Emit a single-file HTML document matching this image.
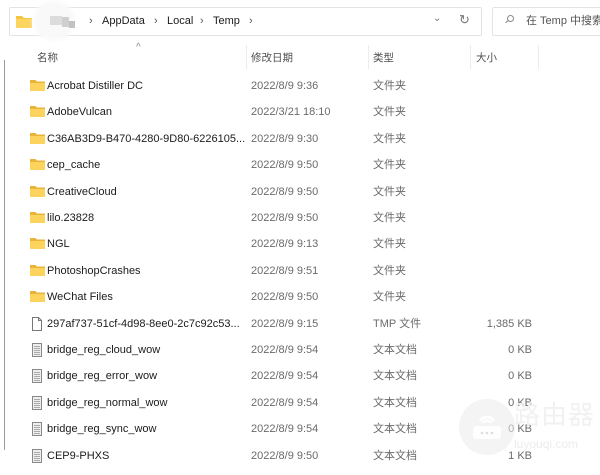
<!DOCTYPE html>
<html><head><meta charset="utf-8"><style>
*{margin:0;padding:0;box-sizing:border-box}
body{width:600px;height:473px;overflow:hidden;background:#fff;font-family:"Liberation Sans","Noto Sans CJK SC",sans-serif;font-size:11px;color:#1b1b1b;position:relative}
.addr{position:absolute;left:9px;top:7px;width:473px;height:29px;border:1px solid #e3e3e3;border-radius:2px;background:#fff}
.search{position:absolute;left:492px;top:7px;width:120px;height:29px;border:1px solid #e3e3e3;border-radius:2px}
.t{position:absolute;white-space:nowrap;line-height:14px;height:14px}
.hdr{color:#4f4f4f;font-size:10.5px}
.sep{position:absolute;top:45px;width:1px;height:24px;background:#ececec}
.row{position:absolute;left:0;height:26px;width:600px}
.row .t{top:0}
.row .n{left:47px}
.row .d{left:251px;color:#6a6a6a}
.row .y{left:373px;color:#6a6a6a}
.row .s{right:68px;color:#6a6a6a}
.ic{position:absolute;left:30px;top:-1px}
</style></head><body>
<div class="addr"></div>
<svg style="position:absolute;left:16px;top:15px" width="16" height="13"><path d="M0 1h6l2 2h8v10H0z" fill="#f4c542"/><rect x="0" y="4" width="16" height="9" fill="#fbd560"/></svg>
<div style="position:absolute;left:36px;top:4px;width:36px;height:34px;border-radius:18px;background:#f9f9f9;box-shadow:0 0 5px 3px #fafafa"></div>
<div style="position:absolute;left:50px;top:16px;width:12px;height:9px;background:#dcdcdc"></div>
<div style="position:absolute;left:62px;top:17px;width:7px;height:10px;background:#cfcfcf"></div>
<div style="position:absolute;left:69px;top:21px;width:6px;height:7px;background:#c2c2c2"></div>
<div class="t" style="left:89px;top:14px;color:#555">›</div>
<div class="t" style="left:102px;top:14px">AppData</div>
<div class="t" style="left:154px;top:14px;color:#555">›</div>
<div class="t" style="left:167px;top:14px">Local</div>
<div class="t" style="left:200px;top:14px;color:#555">›</div>
<div class="t" style="left:213px;top:14px">Temp</div>
<div class="t" style="left:249px;top:14px;color:#555">›</div>
<div class="t" style="left:433px;top:12px;color:#777;font-size:10px">⌄</div>
<div class="t" style="left:459px;top:13px;color:#777;font-size:13px">↻</div>
<div class="search"></div>
<div style="position:absolute;left:507px;top:15px;width:7px;height:7px;border:1px solid #888;border-radius:50%"></div>
<div style="position:absolute;left:505px;top:21px;width:4px;height:1px;background:#888;transform:rotate(-45deg)"></div>
<div class="t" style="left:526px;top:14px;color:#555">在 Temp 中搜索</div>
<div style="position:absolute;left:4px;top:60px;width:1px;height:390px;background:#9a9a9a"></div>
<div class="t" style="left:136px;top:41px;color:#888;font-size:10px">^</div>
<div class="t hdr" style="left:37px;top:51px">名称</div>
<div class="t hdr" style="left:251px;top:51px">修改日期</div>
<div class="t hdr" style="left:373px;top:51px">类型</div>
<div class="t hdr" style="left:476px;top:51px">大小</div>
<div class="sep" style="left:246px"></div><div class="sep" style="left:368px"></div><div class="sep" style="left:470px"></div><div class="sep" style="left:538px"></div>
<div id="rows"></div>
<div style="position:absolute;left:459px;top:399px;width:56px;height:56px;border-radius:50%;background:rgba(235,235,235,.55)"></div>
<svg style="position:absolute;left:471px;top:412px" width="32" height="30"><path d="M9 9a8 8 0 0 1 14 0M12 11a4.5 4.5 0 0 1 8 0" stroke="#fff" stroke-width="2.5" fill="none"/><rect x="2" y="14" width="28" height="13" rx="3" fill="#fff" opacity=".9"/><circle cx="11" cy="21" r="1.3" fill="#ddd"/><circle cx="16" cy="21" r="1.3" fill="#ddd"/><circle cx="21" cy="21" r="1.3" fill="#ddd"/></svg>
<div class="t" style="left:514px;top:400px;font-size:26px;line-height:30px;height:30px;color:rgba(240,240,240,.95);letter-spacing:1px">路由器</div>
<div class="t" style="left:514px;top:437px;font-size:12px;color:rgba(235,235,235,.95)">luyouqi.com</div>
<script>
var F='<svg class="ic" width="15" height="14" viewBox="0 0 15 14"><path d="M0 2h5.5l1.5 1.5h8V13H0z" fill="#e8b53a"/><rect x="0" y="5" width="15" height="8" fill="#fcd45d"/></svg>';
var B='<svg class="ic" width="14" height="16" viewBox="0 0 14 16"><path d="M2.5 1.5h6l3 3v10h-9z" fill="#fff" stroke="#777"/><path d="M8.5 1.5v3h3" fill="none" stroke="#777"/></svg>';
var T='<svg class="ic" width="14" height="16" viewBox="0 0 14 16"><path d="M2.5 1.5h9v13h-9z" fill="#eee" stroke="#888"/><path d="M4 4.5h6M4 6.5h6M4 8.5h6M4 10.5h6M4 12.5h6" stroke="#aaa"/></svg>';
var r=[[F,"Acrobat Distiller DC","2022/8/9 9:36","文件夹",""],[F,"AdobeVulcan","2022/3/21 18:10","文件夹",""],[F,"C36AB3D9-B470-4280-9D80-6226105...","2022/8/9 9:30","文件夹",""],[F,"cep_cache","2022/8/9 9:50","文件夹",""],[F,"CreativeCloud","2022/8/9 9:50","文件夹",""],[F,"lilo.23828","2022/8/9 9:50","文件夹",""],[F,"NGL","2022/8/9 9:13","文件夹",""],[F,"PhotoshopCrashes","2022/8/9 9:51","文件夹",""],[F,"WeChat Files","2022/8/9 9:50","文件夹",""],[B,"297af737-51cf-4d98-8ee0-2c7c92c53...","2022/8/9 9:15","TMP 文件","1,385 KB"],[T,"bridge_reg_cloud_wow","2022/8/9 9:54","文本文档","0 KB"],[T,"bridge_reg_error_wow","2022/8/9 9:54","文本文档","0 KB"],[T,"bridge_reg_normal_wow","2022/8/9 9:54","文本文档","0 KB"],[T,"bridge_reg_sync_wow","2022/8/9 9:54","文本文档","0 KB"],[T,"CEP9-PHXS","2022/8/9 9:50","文本文档","1 KB"]];
var h='';r.forEach(function(x,i){var y=79+i*26.4;h+='<div class="row" style="top:'+y+'px">'+x[0]+'<div class="t n">'+x[1]+'</div><div class="t d">'+x[2]+'</div><div class="t y">'+x[3]+'</div><div class="t s">'+x[4]+'</div></div>';});
document.getElementById('rows').innerHTML=h;
</script>
</body></html>
